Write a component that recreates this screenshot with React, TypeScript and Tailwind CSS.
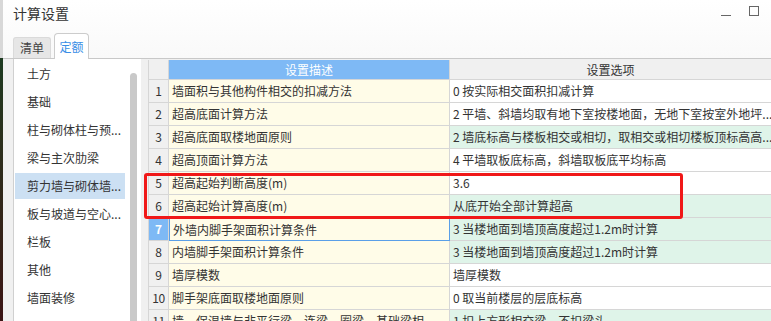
import React from "react";

const FONT = "font-['Microsoft_YaHei','Noto_Sans_CJK_SC',sans-serif]";

const CATEGORIES = [
  "土方", "基础", "柱与砌体柱与预...", "梁与主次肋梁", "剪力墙与砌体墙...",
  "板与坡道与空心...", "栏板", "其他", "墙面装修",
];

const ROWS: { n: number; desc: string; opt: string; green?: boolean }[] = [
  { n: 1, desc: "墙面积与其他构件相交的扣减方法", opt: "0 按实际相交面积扣减计算" },
  { n: 2, desc: "超高底面计算方法", opt: "2 平墙、斜墙均取有地下室按楼地面，无地下室按室外地坪..." },
  { n: 3, desc: "超高底面取楼地面原则", opt: "2 墙底标高与楼板相交或相切，取相交或相切楼板顶标高高...", green: true },
  { n: 4, desc: "超高顶面计算方法", opt: "4 平墙取板底标高，斜墙取板底平均标高" },
  { n: 5, desc: "超高起始判断高度(m)", opt: "3.6" },
  { n: 6, desc: "超高起始计算高度(m)", opt: "从底开始全部计算超高", green: true },
  { n: 7, desc: "外墙内脚手架面积计算条件", opt: "3 当楼地面到墙顶高度超过1.2m时计算", green: true },
  { n: 8, desc: "内墙脚手架面积计算条件", opt: "3 当楼地面到墙顶高度超过1.2m时计算", green: true },
  { n: 9, desc: "墙厚模数", opt: "墙厚模数" },
  { n: 10, desc: "脚手架底面取楼地面原则", opt: "0 取当前楼层的层底标高" },
  { n: 11, desc: "墙、保温墙与非平行梁、连梁、圈梁、基础梁相...", opt: "1 扣上方形相交梁，不扣梁头", green: true },
];

function SettingsGrid() {
  return (
    <div className="flex-1 min-w-0 mt-[1px] border-l border-[#d6d6d6] text-[12px] text-[#333]">
      {/* header */}
      <div className="flex h-[20px] border-b border-[#d6d6d6]">
        <div className="w-[20px] shrink-0 bg-[#f0f0f0] border-r border-[#d6d6d6]" />
        <div className="w-[281px] shrink-0 bg-[#7eb9f5] text-white flex items-center justify-center border-r border-[#d6d6d6]">
          设置描述
        </div>
        <div className="flex-1 bg-[#f0f0f0] flex items-center justify-center">设置选项</div>
      </div>
      {ROWS.map((r) => {
        const sel = r.n === 7;
        return (
          <div key={r.n} className="flex h-[23px] border-b border-[#d6d6d6]">
            <div
              className={`w-[20px] shrink-0 flex items-center justify-center border-r border-[#d6d6d6] ${
                sel ? "bg-[#7eb9f5] text-white font-bold" : "bg-[#f0f0f0]"
              } ${r.n >= 10 ? "tracking-[-0.5px]" : ""}`}
            >
              {r.n}
            </div>
            <div
              className={`w-[281px] shrink-0 bg-[#fffce8] flex items-center pl-[3px] whitespace-nowrap overflow-hidden ${
                sel ? "border border-[#5a9fe8] -mb-px" : "border-r border-[#d6d6d6]"
              }`}
            >
              {r.desc}
            </div>
            <div
              className={`flex-1 min-w-0 flex items-center pl-[3px] whitespace-nowrap overflow-hidden ${
                r.green ? "bg-[#dff4e9]" : "bg-white"
              }`}
            >
              {r.opt}
            </div>
          </div>
        );
      })}
    </div>
  );
}

export default function App() {
  return (
    <div className={`w-[771px] h-[321px] overflow-hidden flex bg-[#f0f0f0] ${FONT}`}>
      {/* desktop behind window edge */}
      <div className="w-[3px] shrink-0 flex flex-col">
        <div className="h-[58px] bg-[#d8d8d8]" />
        <div className="flex-1 bg-gradient-to-b from-[#1c3a20] to-[#3a1414]" />
      </div>

      <div className="flex-1 min-w-0 flex flex-col">
        {/* title bar + tabs */}
        <div className="h-[58px] shrink-0 flex flex-col bg-gradient-to-b from-white to-[#f9f9f9]">
          <div className="h-[27px] flex items-center pl-[10px] pr-[12px]">
            <span className="text-[14px] text-[#333]">计算设置</span>
            <div className="ml-auto flex items-center gap-[18px]">
              <div className="w-[10px] h-px bg-[#666] mt-[4px]" />
              <div className="w-[10px] h-[10px] border border-[#666] -mt-[6px]" />
            </div>
          </div>
          <div className="mt-auto flex items-end pl-[10px] gap-[3px] text-[12px]">
            <div className="w-[38px] h-[21px] flex items-center justify-center rounded-t-[3px] bg-[#e6e6e6] border border-b-0 border-[#dadada] text-[#444]">
              清单
            </div>
            <div className="relative z-10 -mb-px w-[35px] h-[26px] flex items-center justify-center rounded-t-[4px] bg-white border border-b-0 border-[#cccccc] text-[#3a8ee6]">
              定额
            </div>
          </div>
        </div>

        {/* body */}
        <div className="relative flex-1 min-h-0 flex border-t border-[#c8c8c8] pl-[10px]">
          {/* category list */}
          <div className="w-[128px] shrink-0 flex bg-white border-l border-[#d0d0d0] text-[12px] text-[#333]">
            <div className="w-[116px] flex flex-col gap-[2px] pt-[2px]">
              {CATEGORIES.map((c, i) => (
                <div
                  key={c}
                  className={`ml-[1px] w-[110px] h-[26px] shrink-0 flex items-center pl-[12px] whitespace-nowrap ${
                    i === 4 ? "bg-[#cce0f3]" : ""
                  }`}
                >
                  {c}
                </div>
              ))}
            </div>
            <div className="w-[7px] mt-[14px] rounded-t-full bg-[#c9c9c9]" />
          </div>
          <div className="w-[7px] shrink-0" />
          <SettingsGrid />

          {/* red annotation */}
          <div className="absolute left-[141px] top-[114px] w-[539px] h-[46px] border-[3px] border-[#f01818] rounded-[3px] pointer-events-none" />
        </div>
      </div>
    </div>
  );
}
